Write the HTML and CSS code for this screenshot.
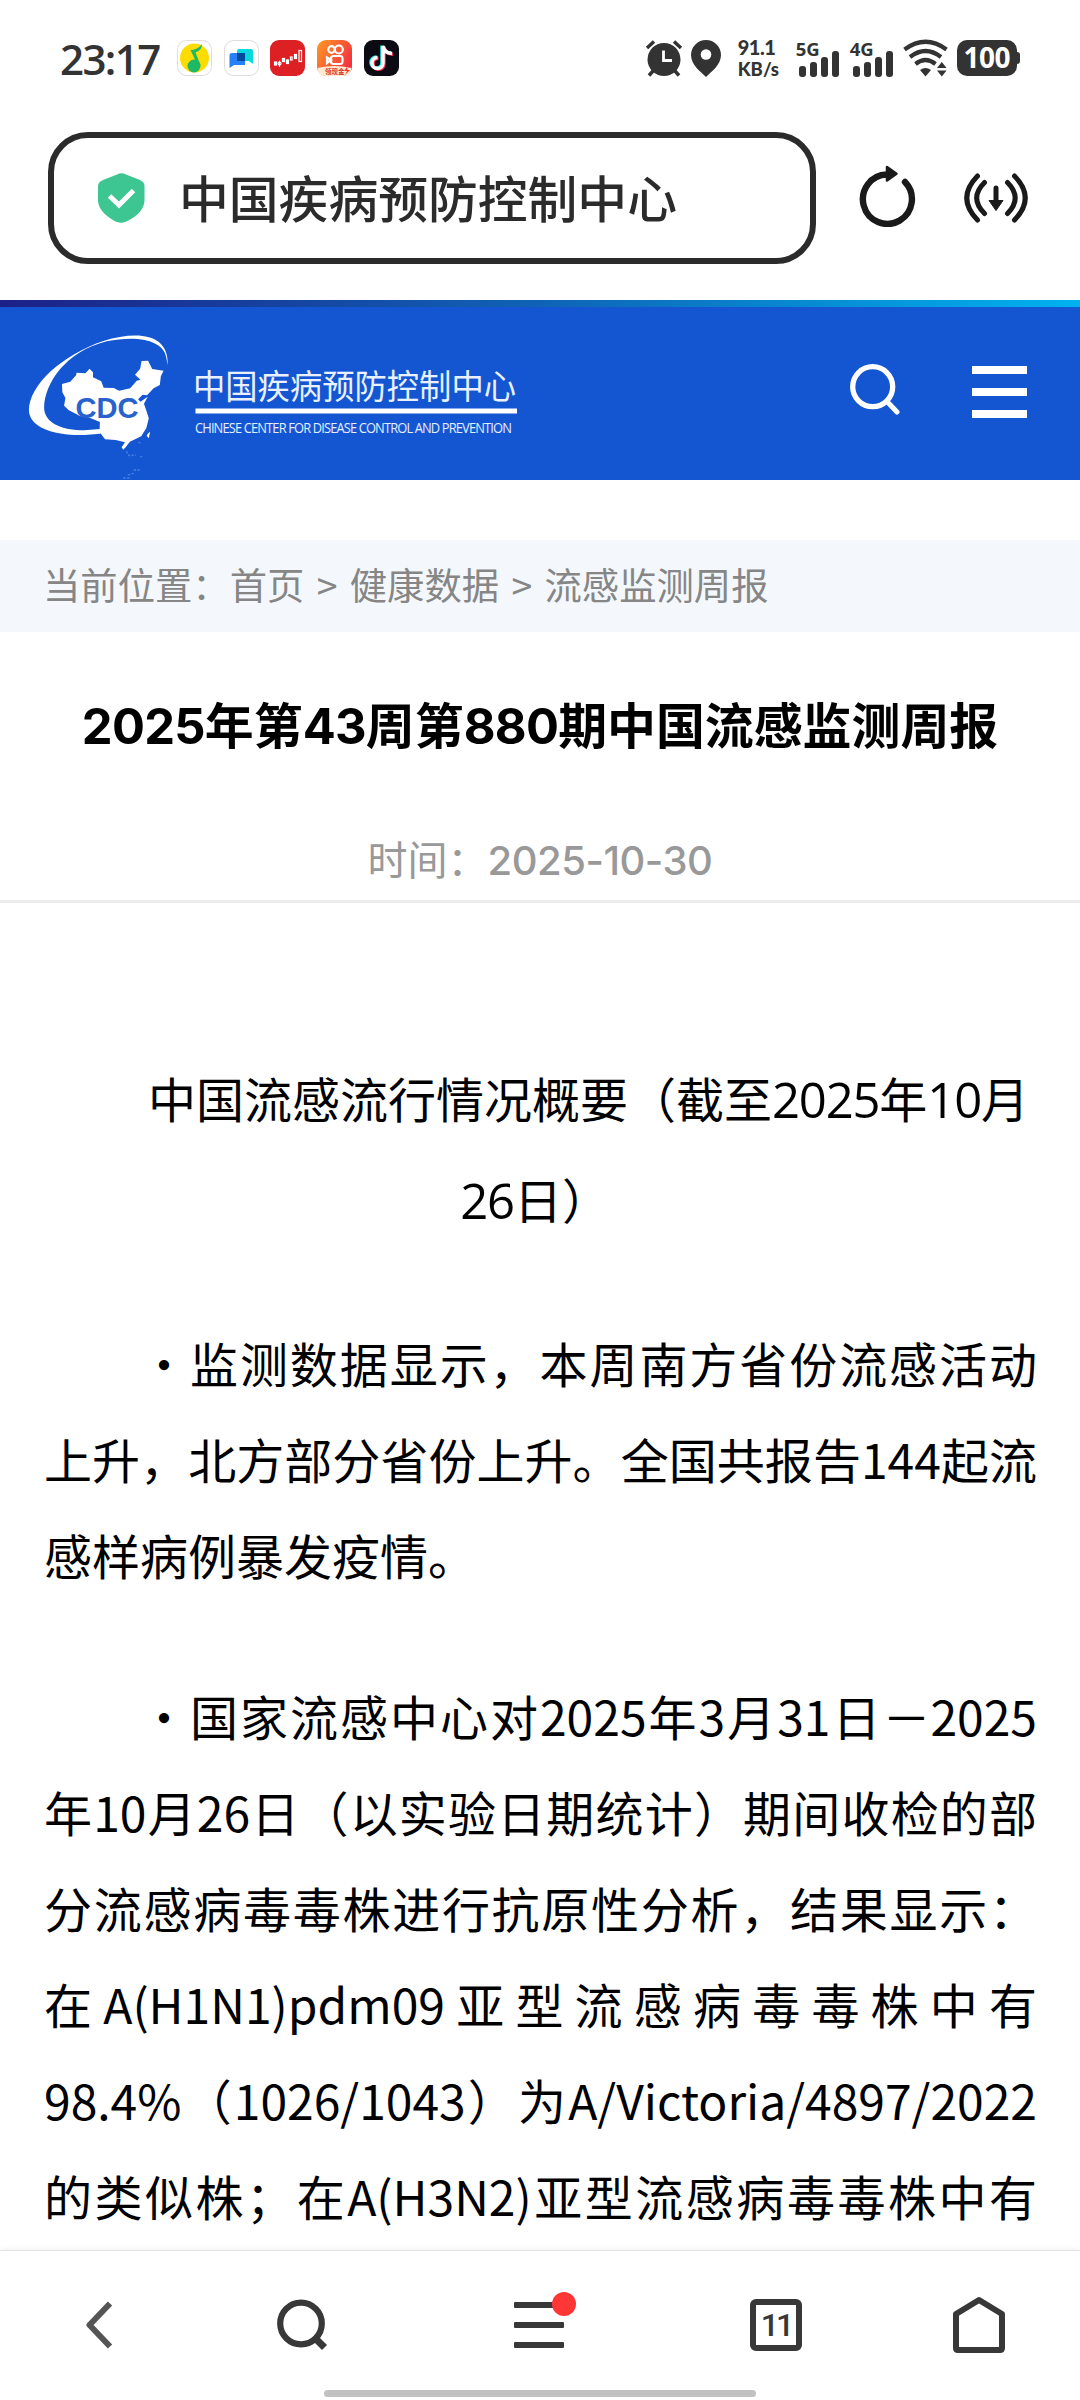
FILE: index.html
```html
<!DOCTYPE html>
<html lang="zh-CN">
  <head>
    <meta charset="UTF-8" />
    <meta name="viewport" content="width=device-width, initial-scale=1.0" />
    <title>中国疾病预防控制中心</title>
    <link rel="stylesheet" href="styles.css">
  </head>
  <body>
    <!-- Status Bar -->
    <div class="status-bar">
      <span class="clock">23:17</span>
      <div class="app-icons">
        <svg width="35" height="36" viewBox="0 0 35 36">
          <rect x="0.5" y="0.5" width="34" height="35" rx="9" fill="#fff" stroke="#ddd" />
          <circle cx="17.500" cy="18" r="14.500" fill="#ffdc00" />
          <circle cx="17" cy="26" r="6.500" fill="#1fb866" />
          <path d="M21 26 L13.500 10 C18 10 22 8 25 4 C25 8 23 11 18.500 12.500 L23.500 25 Z" fill="#1fb866" />
        </svg>
        <svg width="35" height="36" viewBox="0 0 35 36">
          <rect x="0.5" y="0.5" width="34" height="35" rx="9" fill="#fff" stroke="#ddd" />
          <path d="M15 9 H27 Q29 9 29 11 V24 L25 21 H13 V11 Q13 9 15 9 Z" fill="#08d9dc" />
          <path d="M8 13 H21 V25 H10 L5.500 28 V15 Q5.500 13 8 13 Z" fill="#2680f8" />
          <path d="M13 13 H21 V21 H13 Z" fill="#064a9c" />
        </svg>
        <svg width="35" height="36" viewBox="0 0 35 36">
          <rect width="35" height="36" rx="9" fill="#dc2024" />
          <g fill="none" stroke="#fff" stroke-width="1.200">
            <rect x="4.500" y="22" width="2" height="3" fill="#fff" />
            <path d="M9.500 20.500 V27" /><circle cx="9.500" cy="23.500" r="1.500" />
            <rect x="12.500" y="18.500" width="2" height="3" />
            <rect x="16.500" y="20" width="2" height="3.500" fill="#fff" />
            <rect x="20.500" y="17" width="1.600" height="3" />
            <rect x="24.500" y="14.500" width="2" height="4" fill="#fff" />
            <rect x="29" y="10.500" width="2.500" height="11" />
          </g>
        </svg>
        <svg width="35" height="36" viewBox="0 0 35 36">
          <defs>
            <linearGradient id="ks" x1="0" y1="0" x2="1" y2="0.6">
              <stop offset="0" stop-color="#ff9a26" />
              <stop offset="1" stop-color="#f5313e" />
            </linearGradient>
          </defs>
          <rect width="35" height="36" rx="9" fill="url(#ks)" />
          <g fill="none" stroke="#fff" stroke-width="2.200">
            <circle cx="14.500" cy="9.500" r="3.300" />
            <circle cx="21.800" cy="9.500" r="4" />
            <rect x="14" y="16" width="11.500" height="8" rx="2.500" />
            <path d="M14 20 L10 17.500 V23 Z" />
          </g>
          <path d="M0.500 28 Q17 24 34.500 28 Q34 36 26 36 H9 Q1 36 0.500 28 Z" fill="#ffe9d2" />
          <text class="tiny-tag" x="8" y="34">领现金</text>
          <path d="M30 27 L27 31 H30 L28 35 L33 30 H30.500 Z" fill="#f03a2e" />
        </svg>
        <svg width="35" height="36" viewBox="0 0 35 36">
          <rect width="35" height="36" rx="9" fill="#0c0b14" />
          <g fill="none" stroke-width="3.500">
            <path transform="translate(-1,-0.600)" stroke="#25f4ee" d="M19 6 V23 A5.500 5.500 0 1 1 13.500 17.500 M19 6 Q20 13 28 13.500" />
            <path transform="translate(1,0.800)" stroke="#fe2c55" d="M19 6 V23 A5.500 5.500 0 1 1 13.500 17.500 M19 6 Q20 13 28 13.500" />
            <path stroke="#fff" d="M19 6 V23 A5.500 5.500 0 1 1 13.500 17.500 M19 6 Q20 13 28 13.500" />
          </g>
        </svg>
      </div>

      <div class="status-right">
        <svg class="alarm" width="38" height="38" viewBox="0 0 38 38">
          <circle cx="19" cy="20.500" r="16.500" fill="#333" />
          <path d="M2 9 L9 2.500 M36 9 L29 2.500 M8 32 L4 36.500 M30 32 L34 36.500" stroke="#333" stroke-width="3.500" />
          <path d="M18.500 11.500 V21.500 H27" stroke="#fff" stroke-width="2.800" fill="none" />
        </svg>
        <svg class="pin" width="30" height="37" viewBox="0 0 30 37">
          <path d="M15 37 C10 32 0 25 0 15 A15 15 0 0 1 30 15 C30 25 20 32 15 37 Z" fill="#333" />
          <circle cx="15" cy="14.500" r="5.300" fill="#fff" />
        </svg>
        <div class="speed"><b>91.1</b><span>KB/s</span></div>
        <div class="signal">
          <span>5G</span>
          <svg width="41" height="26" viewBox="0 0 41 26" fill="#333">
            <rect x="0" y="15" width="7" height="11" rx="3" /><rect x="11" y="11" width="7" height="15" rx="3" />
            <rect x="22" y="6" width="7" height="20" rx="3" /><rect x="33" y="0" width="7" height="26" rx="3" />
          </svg>
        </div>
        <div class="signal">
          <span>4G</span>
          <svg width="41" height="26" viewBox="0 0 41 26" fill="#333">
            <rect x="0" y="15" width="7" height="11" rx="3" /><rect x="11" y="11" width="7" height="15" rx="3" />
            <rect x="22" y="6" width="7" height="20" rx="3" /><rect x="33" y="0" width="7" height="26" rx="3" />
          </svg>
        </div>
        <svg class="wifi" width="46" height="38" viewBox="0 0 46 38">
          <g fill="none" stroke="#333" stroke-width="4.200">
            <path d="M1.500 10.500 Q22.500 -5 43.500 10.500" />
            <path d="M7 18 Q22.500 6 38 18" />
            <path d="M12.500 25 Q22.500 17 32.500 25" />
          </g>
          <path d="M17 31 Q22.500 27 28 31 L22.500 37.500 Z M34 29 L38.800 23 L43.600 29 Z M34 31.500 L38.800 37.500 L43.600 31.500 Z" fill="#333" />
        </svg>
        <div class="battery">100</div>
      </div>
    </div>

    <!-- Address Bar -->
    <div class="address-bar">
      <div class="url-box">
        <svg width="47" height="50" viewBox="0 0 47 50">
          <path d="M19 1.500 Q23.500 -1 28 1.500 L42 7 Q46.500 9 46.500 13 V27 C46.500 39 34 46 27 49 Q23 50.500 19 49 C12 46 0 38 0 27 V13 Q0 9 5 7 Z" fill="#3dc592" />
          <path d="M11.500 23 L21 32 L35.500 17.500" fill="none" stroke="#fff" stroke-width="5" />
        </svg>
        <span>中国疾病预防控制中心</span>
      </div>
      <svg class="refresh" width="58" height="62" viewBox="0 0 58 62">
        <path d="M29 9.500 A24.500 24.700 0 1 0 47 17" fill="none" stroke="#1a1a1a" stroke-width="6.400" stroke-linecap="round" />
        <path d="M29 2 L38.500 8.800 L29 15.500 Z" fill="#1a1a1a" stroke="#1a1a1a" stroke-width="2.500" stroke-linejoin="round" />
      </svg>
      <svg class="cast" width="64" height="52" viewBox="0 0 64 52">
        <g fill="none" stroke="#1a1a1a" stroke-width="5" stroke-linecap="round">
          <path d="M13.500 4 Q-8 26 13.500 48 M20.500 10.500 Q5 26 20.500 41.500 M50.500 4 Q72 26 50.500 48 M43.500 10.500 Q59 26 43.500 41.500" />
          <path d="M32 16 V30" />
        </g>
        <path d="M25 28.500 H39 L32 38.500 Z" fill="#1a1a1a" stroke="#1a1a1a" stroke-linejoin="round" />
      </svg>
    </div>

    <!-- Site Header -->
    <header class="site-header">
      <svg class="logo" width="540" height="173" viewBox="0 -3 540 173">
        <g transform="scale(0.3444,0.3333)">
          <path fill="#fff" d="M487 166 C491 70 400 62 300 93 C180 135 85 225 84 300 C84 355 165 378 245 375 L292 371 L290 357 L245 361 C180 361 128 340 128 292 C130 220 190 125 310 94 C400 75 480 90 484 150 Z" />
          <path fill="#fff" d="M180 222 L204 215 L221 196 L222 188 L248 190 L260 176 L270 187 L270 202 L294 214 L301 233 L330 234 L346 242 L378 235 L397 212 L408 209 L392 194 L407 176 L411 153 L430 152 L442 177 L475 182 L467 199 L464 225 L446 235 L427 256 L414 254 L401 268 L408 275 L429 260 L418 281 L425 302 L432 325 L425 354 L410 379 L377 395 L366 410 L358 419 L353 412 L363 397 L336 390 L305 388 L289 366 L290 336 L264 325 L232 318 L200 301 L186 287 L190 264 L181 247 Z M429 371 L436 365 L432 385 L426 377 Z" />
          <path fill="none" stroke="#4a80e2" stroke-width="4" stroke-dasharray="7 4" d="M367 424 L375 437 L395 435 M402 396 L408 400 M407 440 H413 M388 480 H410 M371 495 L388 490 M358 504 H376" />
        </g>
        <text class="logo-cdc" x="75.500" y="107.500" textLength="63" lengthAdjust="spacingAndGlyphs">CDC</text>
        <text class="logo-name" x="193" y="89" textLength="323" lengthAdjust="spacingAndGlyphs">中国疾病预防控制中心</text>
        <rect x="195.500" y="98.500" width="321.500" height="5" fill="#fff" />
        <text class="logo-en" x="195" y="122.500" textLength="316" lengthAdjust="spacingAndGlyphs">CHINESE CENTER FOR DISEASE CONTROL AND PREVENTION</text>
      </svg>
      <div class="header-tools">
        <svg width="50" height="51" viewBox="0 0 50 51">
          <path d="M37.500 38 L47 48" stroke="#fff" stroke-width="5" stroke-linecap="round" />
          <circle cx="22.700" cy="22.700" r="20" fill="none" stroke="#fff" stroke-width="5.300" />
        </svg>
        <div class="menu-btn"><i></i><i></i><i></i></div>
      </div>
    </header>

    <!-- Article -->
    <div class="breadcrumb">当前位置：首页 &gt; 健康数据 &gt; 流感监测周报</div>
    <h1><span>2025</span>年第<span>43</span>周第<span>880</span>期中国流感监测周报</h1>
    <div class="pub-time">时间：<span>2025-10-30</span></div>
    <div class="article">
      <p class="summary">中国流感流行情况概要（截至<span>2025</span>年<span>10</span>月<span>26</span>日）&nbsp;</p>
      <p>・监测数据显示，本周南方省份流感活动上升，北方部分省份上升。全国共报告144起流感样病例暴发疫情。</p>
      <p class="cut">・国家流感中心对2025年3月31日－2025年10月26日（以实验日期统计）期间收检的部分流感病毒毒株进行抗原性分析，结果显示：在A(H1N1)pdm09亚型流感病毒毒株中有98.4%（1026/1043）为A/Victoria/4897/2022的类似株；在A(H3N2)亚型流感病毒毒株中有</p>
    </div>

    <!-- Bottom Navigation -->
    <nav class="bottom-nav">
      <div class="nav-items">
        <svg class="nav-back" width="28" height="48" viewBox="0 0 28 48">
          <path d="M25 2.500 L4.500 24 L25 45.500" fill="none" stroke="#555" stroke-width="6" stroke-linejoin="round" />
        </svg>
        <svg class="nav-search" width="52" height="52" viewBox="0 0 52 52">
          <circle cx="24" cy="24.500" r="20.800" fill="none" stroke="#383838" stroke-width="6.200" />
          <path d="M39 40 L47.500 48.500" stroke="#383838" stroke-width="7" />
        </svg>
        <div class="nav-menu"><i></i><i></i><i></i><b></b></div>
        <div class="nav-tabs">11</div>
        <svg class="nav-home" width="52" height="58" viewBox="0 0 52 58">
          <path d="M3 18 L26 4 L49 18 V52 Q49 54 47 54 H5 Q3 54 3 52 Z" fill="none" stroke="#383838" stroke-width="6" stroke-linejoin="round" />
        </svg>
      </div>
      <div class="home-indicator"></div>
    </nav>
  </body>
</html>
```

FILE: styles.css
```css
* {
  box-sizing: border-box;
}

body {
  margin: 0;
  width: 1080px;
  height: 2400px;
  display: flex;
  flex-direction: column;
  overflow: hidden;
  background: #fff;
  color: #000;
  font-family: "Noto Sans CJK SC", "Noto Sans", sans-serif;
}

svg {
  display: block;
  flex: none;
}

/* Status bar */
.status-bar {
  height: 116px;
  flex: none;
  display: flex;
  align-items: center;
  padding-left: 60px;
  color: #333;
}

.clock {
  width: 117px;
  font-family: "Open Sans", sans-serif;
  font-size: 42px;
  font-weight: 600;
  letter-spacing: -1.6px;
}

.app-icons {
  display: flex;
  gap: 11.7px;
}

.tiny-tag {
  font-size: 6.5px;
  font-weight: 700;
  fill: #d8372b;
}

.status-right {
  display: flex;
  align-items: center;
  margin-left: 246px;
}

.pin {
  margin-left: 8px;
}

.speed {
  width: 44px;
  margin: 0 15px 0 17px;
  font-family: Lato, sans-serif;
  font-weight: 900;
  font-size: 18.5px;
  line-height: 22px;
  white-space: nowrap;
}

.speed b,
.speed span {
  display: block;
}

.speed b {
  font-size: 20px;
  font-weight: 900;
  letter-spacing: -0.5px;
}

.signal {
  width: 54px;
  height: 38px;
  position: relative;
  display: flex;
  align-items: flex-end;
  padding-left: 2px;
}

.signal span {
  position: absolute;
  left: -1px;
  top: 0;
  font-family: "Open Sans", sans-serif;
  font-weight: 700;
  font-size: 18.5px;
  line-height: 20px;
}

.wifi {
  margin-left: -2px;
}

.battery {
  position: relative;
  width: 60px;
  height: 36px;
  margin-left: 8px;
  border-radius: 10px;
  background: #333;
  color: #fff;
  font-family: "Open Sans", sans-serif;
  font-weight: 700;
  font-size: 28px;
  line-height: 35px;
  text-align: center;
  letter-spacing: -0.5px;
}

.battery::after {
  content: "";
  position: absolute;
  right: -3px;
  top: 12px;
  width: 4px;
  height: 12px;
  border-radius: 0 3px 3px 0;
  background: #333;
}

/* Address bar */
.address-bar {
  height: 184px;
  flex: none;
  display: flex;
  align-items: flex-start;
  padding: 16px 0 0 48px;
}

.url-box {
  width: 768px;
  height: 132px;
  display: flex;
  align-items: center;
  padding-left: 44px;
  border: 6px solid #2b2b2b;
  border-radius: 40px;
  color: #2b2b2b;
  font-size: 49.8px;
  font-weight: 500;
}

.url-box span {
  margin-left: 34px;
  padding-bottom: 5px;
}

.refresh {
  margin: 33px 0 0 42px;
}

.cast {
  margin: 40px 0 0 48px;
}

/* Site header */
.site-header {
  height: 180px;
  flex: none;
  display: flex;
  justify-content: space-between;
  background: #1456d2;
}

.site-header::before {
  content: "";
  position: absolute;
  width: 1080px;
  height: 7px;
  background: linear-gradient(90deg, #1d2088, #0f63b6 50%, #00b2f0);
}

.logo {
  margin-top: 7px;
}

.logo-cdc {
  font-family: "Liberation Sans", sans-serif;
  font-size: 30px;
  font-weight: 700;
  fill: #2a62cc;
}

.logo-name {
  font-size: 34px;
  font-weight: 400;
  fill: #e9f0ff;
}

.logo-en {
  font-family: "Open Sans", sans-serif;
  font-size: 15px;
  letter-spacing: -1px;
  fill: #e6eeff;
}

.header-tools {
  display: flex;
  gap: 72px;
  padding: 64px 53px 0 0;
}

.menu-btn {
  display: flex;
  flex-direction: column;
  gap: 14.5px;
  padding-top: 2px;
}

.menu-btn i {
  width: 55px;
  height: 7.5px;
  background: #fff;
}

/* Article */
.breadcrumb {
  height: 92px;
  flex: none;
  margin-top: 60px;
  padding-left: 43px;
  background: #f4f8fd;
  color: #868686;
  font-size: 37.35px;
  line-height: 89px;
  word-spacing: 4px;
}

h1 {
  height: 72px;
  flex: none;
  margin: 55px 0 0;
  font-size: 48.9px;
  font-weight: 700;
  line-height: 72px;
  text-align: center;
}

h1 span {
  font-family: Inter, sans-serif;
  line-height: 1;
  letter-spacing: -0.7px;
}

.pub-time {
  height: 83px;
  flex: none;
  margin-top: 61px;
  border-bottom: 3px solid #ececec;
  color: #999;
  font-size: 40px;
  line-height: 76px;
  text-align: center;
}

.pub-time span {
  font-family: Inter, sans-serif;
  font-weight: 500;
  line-height: 1;
  letter-spacing: -0.5px;
}

.article {
  flex: 1;
  min-height: 0;
  overflow: hidden;
  padding: 144px 43px 0 44px;
  font-size: 48px;
}

.article p {
  margin: 0 0 65px;
  line-height: 96px;
  text-indent: 2em;
  text-align: justify;
}

.article .summary {
  line-height: 101px;
  text-align: center;
}

.summary span {
  font-family: "Open Sans", sans-serif;
  font-size: 49px;
  line-height: 1;
  letter-spacing: -1.2px;
}

.article .cut {
  text-align-last: justify;
}

/* Bottom navigation */
.bottom-nav {
  position: relative;
  height: 150px;
  flex: none;
  border-top: 1px solid #e2e2e2;
  background: #fff;
  box-shadow: 0 -1px 6px rgba(0, 0, 0, 0.06);
}

.nav-items {
  height: 139px;
  display: flex;
  align-items: center;
  padding: 8px 0 0 85px;
}

.nav-search {
  margin-left: 164px;
}

.nav-menu {
  position: relative;
  width: 50px;
  display: flex;
  flex-direction: column;
  gap: 14px;
  margin-left: 185px;
}

.nav-menu i {
  height: 6px;
  border-radius: 1px;
  background: #383838;
}

.nav-menu b {
  position: absolute;
  right: -12px;
  top: -10px;
  width: 24px;
  height: 24px;
  border-radius: 50%;
  background: #ff3636;
}

.nav-tabs {
  width: 52px;
  height: 52px;
  margin-left: 186px;
  border: 6px solid #383838;
  border-radius: 6px;
  color: #383838;
  font-family: Roboto, sans-serif;
  font-size: 32px;
  font-weight: 500;
  line-height: 40px;
  text-align: center;
  letter-spacing: -3px;
}

.nav-home {
  margin-left: 151px;
}

.home-indicator {
  width: 432px;
  height: 7px;
  margin: 0 auto;
  border-radius: 4px;
  background: #c1c1c1;
}
```
